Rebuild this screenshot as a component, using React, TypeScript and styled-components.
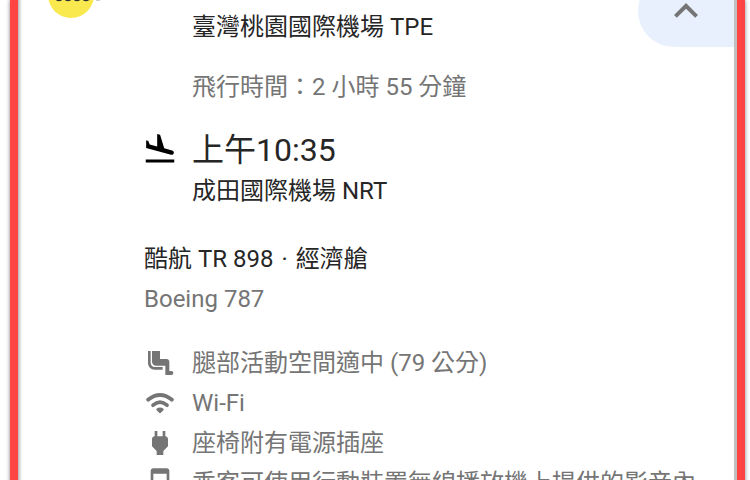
import React from 'react';
import styled, { createGlobalStyle } from 'styled-components';
import {
  MdAirlineSeatLegroomNormal,
  MdExpandLess,
  MdFlightLand,
  MdPower,
  MdSmartphone,
} from 'react-icons/md';

const GlobalStyle = createGlobalStyle`
  * { box-sizing: border-box; }
  body {
    margin: 0;
    background: #fff;
    color: #262626;
    font: 24px/40px Roboto, "Noto Sans CJK TC", sans-serif;
  }
`;

const Page = styled.div`
  height: 100vh;
  overflow: hidden;
  padding: 0 5px 0 10px;
`;

const Frame = styled.main`
  min-height: 100%;
  display: grid;
  grid-template-columns: 126px minmax(0, 1fr);
  border: solid #ff4444;
  border-width: 0 8px;
  padding-right: 3px;
  background: linear-gradient(to right, #b8b8b8, #fff 4px) padding-box;
  box-shadow:
    0 0 4px rgba(0, 0, 0, 0.5),
    inset -3px 0 0 #c0c0c0;
`;

const AirlineLogo = styled.svg`
  display: block;
  width: 56px;
  height: 18px;
  margin-left: 30px;
`;

const Content = styled.div`
  min-width: 0;
`;

const Head = styled.div`
  display: flex;
  justify-content: space-between;
  height: 67px;
`;

const Airport = styled.p`
  margin: 0;
`;

const DepartureAirport = styled(Airport)`
  padding: 7px 0 0 48px;
`;

const CollapseButton = styled.button`
  display: flex;
  justify-content: center;
  align-items: center;
  width: 96px;
  height: 72px;
  margin-top: -25px;
  padding: 0;
  border: 0;
  border-radius: 36px 0 0 36px;
  background: #e8f0fe;
  color: #757575;
  font-size: 48px;
  cursor: pointer;
`;

const Duration = styled.p`
  margin: 0;
  padding-left: 48px;
  color: #757575;
`;

const Arrival = styled.section`
  display: grid;
  grid-template-columns: 32px minmax(0, 1fr);
  column-gap: 16px;
  margin-top: 22px;
`;

const Time = styled.time`
  display: block;
  font-size: 32px;
  line-height: 42px;
`;

const ArrivalIcon = styled(MdFlightLand)`
  justify-self: center;
  width: 36px;
  height: 36px;
  margin-top: 2px;
  color: #000;
`;

const Flight = styled.section`
  margin-top: 28px;
`;

const FlightLine = styled.p<{ $muted?: boolean }>`
  margin: 0;
  color: ${({ $muted }) => ($muted ? '#757575' : 'inherit')};
`;

const Separator = styled.span`
  padding: 0 2px;
`;

const Amenities = styled.ul`
  margin: 24px 0 0;
  padding: 0;
  list-style: none;
  color: #757575;
`;

const Amenity = styled.li`
  display: flex;
  align-items: center;
  gap: 16px;
  height: 40px;
  white-space: nowrap;

  svg {
    flex: none;
    width: 32px;
    height: 32px;
  }
`;

function WifiIcon(props: React.SVGProps<SVGSVGElement>) {
  return (
    <svg viewBox="0 0 32 32" fill="none" stroke="currentColor" strokeLinecap="round" strokeLinejoin="round" {...props}>
      <path d="M4 12.700Q16 3.300 28 12.700M9 18.200Q16 12 23 18.200" strokeWidth="3.7" />
      <path d="M13.500 22.500Q16 21 18.500 22.500L16 25z" strokeWidth="2.4" fill="currentColor" />
    </svg>
  );
}

const amenities = [
  { icon: MdAirlineSeatLegroomNormal, label: '腿部活動空間適中 (79 公分)' },
  { icon: WifiIcon, label: 'Wi-Fi' },
  { icon: MdPower, label: '座椅附有電源插座' },
  { icon: MdSmartphone, label: '乘客可使用行動裝置無線播放機上提供的影音內' },
];

export default function App() {
  return (
    <Page>
      <GlobalStyle />
      <Frame>
        <AirlineLogo viewBox="0 0 56 18" role="img" aria-label="酷航">
          <circle cx="23" cy="-5" r="23" fill="#f9e94e" />
          <path
            d="M8 -1q3 2.500 6 0M17 -1q3 2.500 6 0M26 -1q3 2.500 6 0M35 -1q3 2.500 6 0"
            stroke="#333"
            strokeWidth="2"
            fill="none"
          />
          <path d="M48 0h4" stroke="#999" strokeWidth="1" />
        </AirlineLogo>
        <Content>
          <Head>
            <DepartureAirport>臺灣桃園國際機場 TPE</DepartureAirport>
            <CollapseButton type="button" aria-label="收合航班詳細資料" aria-expanded="true">
              <MdExpandLess />
            </CollapseButton>
          </Head>
          <Duration>飛行時間：2 小時 55 分鐘</Duration>
          <Arrival>
            <ArrivalIcon aria-hidden="true" />
            <div>
              <Time dateTime="10:35">上午10:35</Time>
              <Airport>成田國際機場 NRT</Airport>
            </div>
          </Arrival>
          <Flight>
            <FlightLine>
              酷航 TR 898 <Separator>·</Separator> 經濟艙
            </FlightLine>
            <FlightLine $muted>Boeing 787</FlightLine>
          </Flight>
          <Amenities>
            {amenities.map(({ icon: Icon, label }) => (
              <Amenity key={label}>
                <Icon aria-hidden="true" />
                <span>{label}</span>
              </Amenity>
            ))}
          </Amenities>
        </Content>
      </Frame>
    </Page>
  );
}
